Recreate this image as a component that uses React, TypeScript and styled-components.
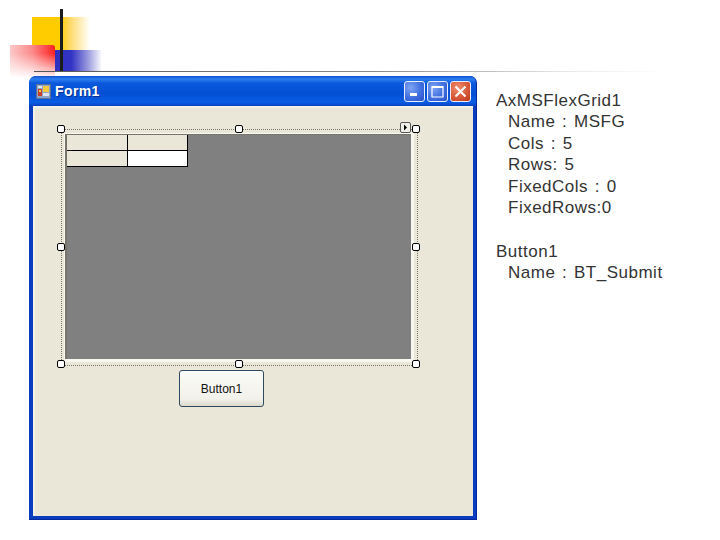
import React from 'react';
import styled, { createGlobalStyle } from 'styled-components';

const GlobalStyle = createGlobalStyle`
  html, body {
    margin: 0;
    padding: 0;
    background: #ffffff;
  }
`;

const Slide = styled.div`
  width: 720px;
  height: 540px;
  overflow: hidden;
  background: #ffffff;
`;

const Header = styled.header`
  position: relative;
  height: 76px;
`;

const YellowSquare = styled.div`
  position: absolute;
  left: 32px;
  top: 17px;
  width: 58px;
  height: 33px;
  background: linear-gradient(to right, #ffcc00 0%, #ffcc00 48%, #ffd966 65%, rgba(255, 225, 130, 0) 100%);
`;

const BlueBand = styled.div`
  position: absolute;
  left: 55px;
  top: 50px;
  width: 47px;
  height: 21px;
  background: linear-gradient(to right, #2f2fc0 0%, #3333c4 35%, #a0a0e0 72%, rgba(255, 255, 255, 0) 100%);
`;

const RedBlock = styled.div`
  position: absolute;
  left: 10px;
  top: 45px;
  width: 45px;
  height: 33px;
  border-top-right-radius: 2px;
  background: linear-gradient(to right, #fcc8c8 0%, #fb8a8a 50%, #ff2020 100%);
  mask-image: linear-gradient(to bottom, #000 25%, rgba(0, 0, 0, 0) 100%);
`;

const BlackBar = styled.div`
  position: absolute;
  left: 60px;
  top: 9px;
  width: 3px;
  height: 62px;
  background: #1c1c1c;
`;

const HeaderRule = styled.div`
  position: absolute;
  left: 34px;
  top: 71px;
  width: 630px;
  height: 1px;
  background: linear-gradient(to right, #555555 0%, #8a8a8a 55%, rgba(220, 220, 220, 0.6) 85%, rgba(255, 255, 255, 0) 100%);
`;

const Content = styled.main`
  display: flex;
  align-items: flex-start;
  padding-left: 29px;
  gap: 19px;
`;

const Window = styled.section`
  width: 448px;
  height: 444px;
  box-sizing: border-box;
  display: flex;
  flex-direction: column;
  border-radius: 7px 7px 0 0;
  background: #0a3cc0;
  border-right: 1px solid #06289a;
  border-bottom: 1px solid #06289a;
  overflow: hidden;
`;

const TitleBar = styled.div`
  height: 30px;
  flex: none;
  display: flex;
  align-items: center;
  padding: 0 5px 0 7px;
  background: linear-gradient(to bottom, #0a4fd0 0%, #2f7ff0 10%, #0a58dc 24%, #0450d4 60%, #0a5ce4 88%, #0440c0 100%);
`;

const TitleText = styled.span`
  flex: 1;
  margin-left: 4px;
  font-family: "Liberation Sans", Arial, sans-serif;
  font-size: 14px;
  font-weight: 700;
  letter-spacing: 0.4px;
  color: #ffffff;
  text-shadow: 1px 1px 0 #0a2f90;
`;

const CaptionButton = styled.div<{ $close?: boolean }>`
  width: 21px;
  height: 21px;
  box-sizing: border-box;
  margin-left: 2px;
  display: flex;
  align-items: center;
  justify-content: center;
  border: 1px solid #e8eefc;
  border-radius: 3px;
  background: ${(p) =>
    p.$close
      ? 'radial-gradient(circle at 35% 30%, #ee9070 0%, #d9583a 55%, #bb3a1c 100%)'
      : 'radial-gradient(circle at 30% 30%, #7fa4f2 0%, #3f6fe0 55%, #2a50c8 100%)'};
`;

const Client = styled.div`
  flex: 1;
  margin: 0 3px 3px 4px;
  background: #eae7d8;
  padding: 23px 0 0 28px;
  box-sizing: border-box;
  box-shadow: inset 2px 2px 0 #f2f1e8;
`;

const DesignerFrame = styled.div`
  position: relative;
  width: 357px;
  height: 237px;
  box-sizing: border-box;
  border: 1px dotted #77776c;
  padding: 4px 6px 6px 3px;
`;

const Handle = styled.span<{ $x: string; $y: string }>`
  position: absolute;
  left: ${(p) => p.$x};
  top: ${(p) => p.$y};
  width: 8px;
  height: 8px;
  margin: -5px 0 0 -5px;
  box-sizing: border-box;
  background: #ffffff;
  border: 1.5px solid #000000;
  border-radius: 2px;
`;

const SmartTag = styled.span`
  position: absolute;
  right: 6px;
  top: -8px;
  width: 11px;
  height: 11px;
  box-sizing: border-box;
  border: 1px solid #555555;
  border-radius: 2px;
  background: #f2f0e6;
  display: flex;
  align-items: center;
  justify-content: center;
`;

const GridControl = styled.div`
  height: 100%;
  box-sizing: border-box;
  background: #808080;
  border-top: 1px solid #77756a;
  border-left: 2px solid #77756a;
  box-shadow: 1px 1px 0 2px #f8f7f0;
`;

const FlexCells = styled.div`
  display: grid;
  grid-template-columns: 61px 59px;
  grid-template-rows: 16px 15px;
  width: 120px;
  border-right: 1px solid #000000;
  border-bottom: 1px solid #000000;
`;

const FlexCell = styled.div<{ $fixed?: boolean }>`
  background: ${(p) => (p.$fixed ? '#eae7d8' : '#ffffff')};
  border-right: 1px solid #000000;
  border-bottom: 1px solid #000000;
  &:nth-child(2n) { border-right: none; }
  &:nth-child(n + 3) { border-bottom: none; }
`;

const DesignButton = styled.button`
  display: block;
  width: 85px;
  height: 37px;
  margin: 4px 0 0 118px;
  padding: 0;
  border: 1px solid #2e4a60;
  border-radius: 3px;
  background: linear-gradient(to bottom, #fbfbf7 0%, #f2f1ea 80%, #dcd9cc 100%);
  font-family: "Liberation Sans", Arial, sans-serif;
  font-size: 12px;
  color: #111111;
`;

const Notes = styled.aside`
  padding-top: 13.5px;
  font-family: "Liberation Sans", Arial, sans-serif;
  font-size: 17px;
  line-height: 21.6px;
  letter-spacing: 0.5px;
  word-spacing: 1.5px;
  color: #333333;
`;

const NoteHead = styled.div<{ $spaced?: boolean }>`
  margin-top: ${(p) => (p.$spaced ? '21.6px' : '0')};
`;

const NoteLine = styled.div`
  padding-left: 12px;
  white-space: pre;
`;

const FormIcon = () => (
  <svg width="15" height="15" viewBox="0 0 15 15">
    <rect x="0.5" y="0.5" width="14" height="14" fill="#8ea4c8" stroke="#5c6f94" />
    <rect x="2" y="5" width="4" height="7" fill="#c8402c" />
    <rect x="3" y="6" width="2" height="2" fill="#f0d040" />
    <rect x="7" y="2" width="6" height="6" fill="#f4c83c" />
    <rect x="7" y="9" width="6" height="3" fill="#dfe6f2" />
    <rect x="2" y="2" width="4" height="2" fill="#dfe6f2" />
  </svg>
);

const handles: [string, string][] = [
  ['0px', '0px'], ['50%', '0px'], ['100%', '0px'],
  ['0px', '50%'], ['100%', '50%'],
  ['0px', '100%'], ['50%', '100%'], ['100%', '100%'],
];

const App: React.FC = () => {
  return (
    <Slide>
      <GlobalStyle />
      <Header>
        <YellowSquare />
        <BlueBand />
        <RedBlock />
        <BlackBar />
        <HeaderRule />
      </Header>
      <Content>
        <Window>
          <TitleBar>
            <FormIcon />
            <TitleText>Form1</TitleText>
            <CaptionButton>
              <svg width="13" height="13" viewBox="0 0 13 13">
                <rect x="2" y="8" width="7" height="3" fill="#ffffff" />
              </svg>
            </CaptionButton>
            <CaptionButton>
              <svg width="15" height="15" viewBox="0 0 15 15">
                <path d="M2 2.500h11v10.500h-11z" fill="none" stroke="#ffffff" strokeWidth="1.200" />
                <rect x="2" y="2" width="11" height="2" fill="#ffffff" />
              </svg>
            </CaptionButton>
            <CaptionButton $close>
              <svg width="15" height="15" viewBox="0 0 15 15">
                <path d="M2.500 2.500l10 10M12.500 2.500l-10 10" stroke="#ffffff" strokeWidth="2" />
              </svg>
            </CaptionButton>
          </TitleBar>
          <Client>
            <DesignerFrame>
              {handles.map(([x, y]) => (
                <Handle key={x + y} $x={x} $y={y} />
              ))}
              <SmartTag>
                <svg width="7" height="7" viewBox="0 0 7 7">
                  <path d="M2 0.500l3 3-3 3z" fill="#000000" />
                </svg>
              </SmartTag>
              <GridControl>
                <FlexCells>
                  <FlexCell $fixed />
                  <FlexCell $fixed />
                  <FlexCell $fixed />
                  <FlexCell />
                </FlexCells>
              </GridControl>
            </DesignerFrame>
            <DesignButton>Button1</DesignButton>
          </Client>
        </Window>
        <Notes>
          <NoteHead>AxMSFlexGrid1</NoteHead>
          <NoteLine>Name : MSFG</NoteLine>
          <NoteLine>Cols : 5</NoteLine>
          <NoteLine>Rows: 5</NoteLine>
          <NoteLine>FixedCols : 0</NoteLine>
          <NoteLine>FixedRows:0</NoteLine>
          <NoteHead $spaced>Button1</NoteHead>
          <NoteLine>Name : BT_Submit</NoteLine>
        </Notes>
      </Content>
    </Slide>
  );
};

export default App;
